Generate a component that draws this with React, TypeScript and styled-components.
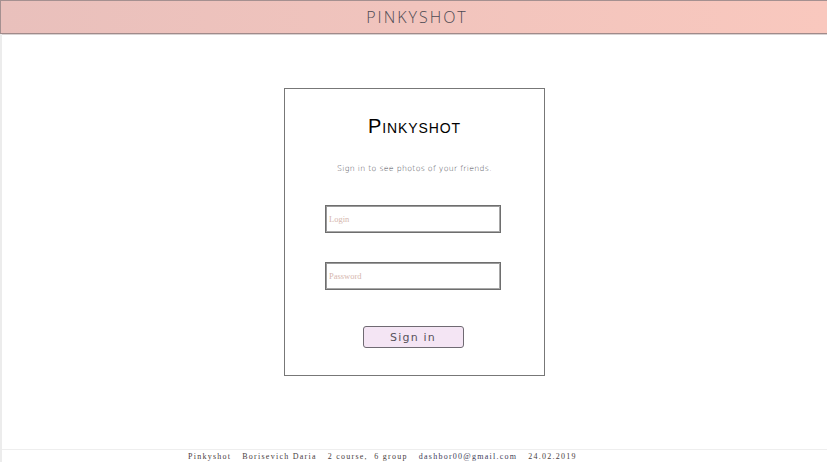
import React from "react";
import styled, { createGlobalStyle } from "styled-components";

const Global = createGlobalStyle`
  html, body { margin: 0; padding: 0; background: #fff; }
  * { box-sizing: border-box; }
`;

const Page = styled.div`
  width: 827px;
  height: 462px;
  display: flex;
  flex-direction: column;
  overflow: hidden;
`;

const Header = styled.header`
  height: 34px;
  flex: none;
  display: flex;
  align-items: center;
  justify-content: center;
  background: linear-gradient(90deg, #e9c0bc 0%, #f1c4bd 50%, #f9c8be 100%);
  border-top: 1px solid #a59090;
  border-left: 1px solid #a59090;
  border-bottom: 1px solid #a08a8a;
  box-shadow: 0 1px 0 #d8d2d2;
`;

const HeaderTitle = styled.h1`
  margin: 0;
  font-family: "Open Sans", "Liberation Sans", sans-serif;
  font-weight: 300;
  font-size: 16px;
  letter-spacing: 2px;
  color: #4c4a52;
  padding-left: 6px;
`;

const Body = styled.div`
  flex: 1;
  display: flex;
  flex-direction: column;
  border-left: 2px solid #ececec;
`;

const Main = styled.main`
  flex: 1;
  display: flex;
  justify-content: center;
  padding-top: 54px;
`;

const Card = styled.form`
  width: 261px;
  height: 288px;
  border: 1px solid #777;
  display: flex;
  flex-direction: column;
  align-items: center;
  padding-top: 25px;
  padding-right: 3px;
`;

const CardTitle = styled.h2`
  margin: 0;
  font-family: "Liberation Sans", Arial, sans-serif;
  font-weight: 400;
  font-variant: small-caps;
  font-size: 20px;
  letter-spacing: 0.9px;
  color: #000;
  line-height: 24px;
  padding-left: 3px;
`;

const Subtitle = styled.p`
  margin: 25px 0 0;
  font-family: "DejaVu Sans", sans-serif;
  font-weight: 300;
  font-size: 7.8px;
  letter-spacing: 0.3px;
  color: #4e4e56;
  line-height: 12px;
  padding-left: 3px;
`;

const Input = styled.input<{ $gap: number }>`
  width: 176px;
  height: 28px;
  border: 1px solid #6e6e6e;
  box-shadow: inset -1px -1px 0 #a8a8a8, inset 1px 1px 0 #9a9a9a;
  padding: 0 3px;
  font-family: "Liberation Serif", serif;
  font-size: 8.5px;
  outline: none;
  background: #fff;
  margin-top: ${(p) => p.$gap}px;
  &::placeholder { color: #d6b7ae; }
`;

const Button = styled.button`
  margin-top: 36px;
  width: 101px;
  height: 22px;
  background: #f4e5f4;
  border: 1px solid #6f6a72;
  border-radius: 3px;
  font-family: "DejaVu Sans", sans-serif;
  font-size: 11px;
  letter-spacing: 1.2px;
  color: #57525a;
  padding: 0;
  cursor: pointer;
`;

const Footer = styled.footer`
  height: 13px;
  flex: none;
  border-top: 1px solid #eeeeee;
  display: flex;
  align-items: center;
  gap: 11px;
  padding-left: 186px;
  font-family: "Liberation Serif", serif;
  font-size: 8px;
  letter-spacing: 1.25px;
  color: #4a4040;
  white-space: nowrap;
`;

const Email = styled.span`
  color: #3c3c58;
`;

export default function App() {
  return (
    <>
      <Global />
      <Page>
        <Header>
          <HeaderTitle>PINKYSHOT</HeaderTitle>
        </Header>
        <Body>
          <Main>
            <Card onSubmit={(e) => e.preventDefault()}>
              <CardTitle>Pinkyshot</CardTitle>
              <Subtitle>Sign in to see photos of your friends.</Subtitle>
              <Input $gap={30} type="text" placeholder="Login" />
              <Input $gap={29} type="password" placeholder="Password" />
              <Button type="submit">Sign in</Button>
            </Card>
          </Main>
          <Footer>
            <span>Pinkyshot</span>
            <span>Borisevich Daria</span>
            <span>2 course,&nbsp; 6 group</span>
            <Email>dashbor00@gmail.com</Email>
            <span>24.02.2019</span>
          </Footer>
        </Body>
      </Page>
    </>
  );
}
